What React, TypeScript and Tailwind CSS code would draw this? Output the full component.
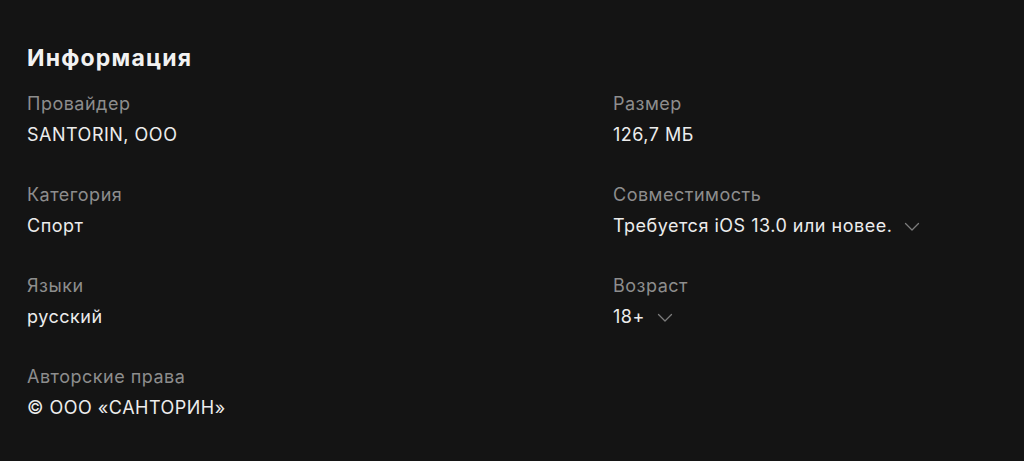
import React from 'react';

function Chevron() {
  return (
    <svg width="16" height="10" viewBox="0 0 16 10" fill="none" className="ml-3 mt-[2px] text-[#7c7c7c]">
      <path d="M1.5 1.5L8 8L14.5 1.5" stroke="currentColor" strokeWidth="1.3" strokeLinecap="round" strokeLinejoin="round" />
    </svg>
  );
}

function Item({ label, value, expandable }: { label: string; value: string; expandable?: boolean }) {
  return (
    <div className="flex flex-col tracking-[0.5px]">
      <div className="text-[18px] leading-[24px] text-[#8d8d8d]">{label}</div>
      <div className="mt-[7px] flex items-center text-[18px] leading-[24px] text-[#ececec]">
        <span>{value}</span>
        {expandable && <Chevron />}
      </div>
    </div>
  );
}

export default function App() {
  return (
    <div
      className="min-h-screen w-full bg-[#141414] px-[27px] pt-[44px]"
      style={{ fontFamily: 'Inter, "Noto Sans", sans-serif' }}
    >
      <h2 className="text-[23px] font-bold leading-[28px] tracking-[1.2px] text-[#f2f2f2]">Информация</h2>
      <div className="mt-[20px] grid grid-cols-[586px_1fr] gap-y-[36px]">
        <Item label="Провайдер" value="SANTORIN, OOO" />
        <Item label="Размер" value="126,7 МБ" />
        <Item label="Категория" value="Спорт" />
        <Item label="Совместимость" value="Требуется iOS 13.0 или новее." expandable />
        <Item label="Языки" value="русский" />
        <Item label="Возраст" value="18+" expandable />
        <Item label="Авторские права" value="© ООО «САНТОРИН»" />
      </div>
    </div>
  );
}
